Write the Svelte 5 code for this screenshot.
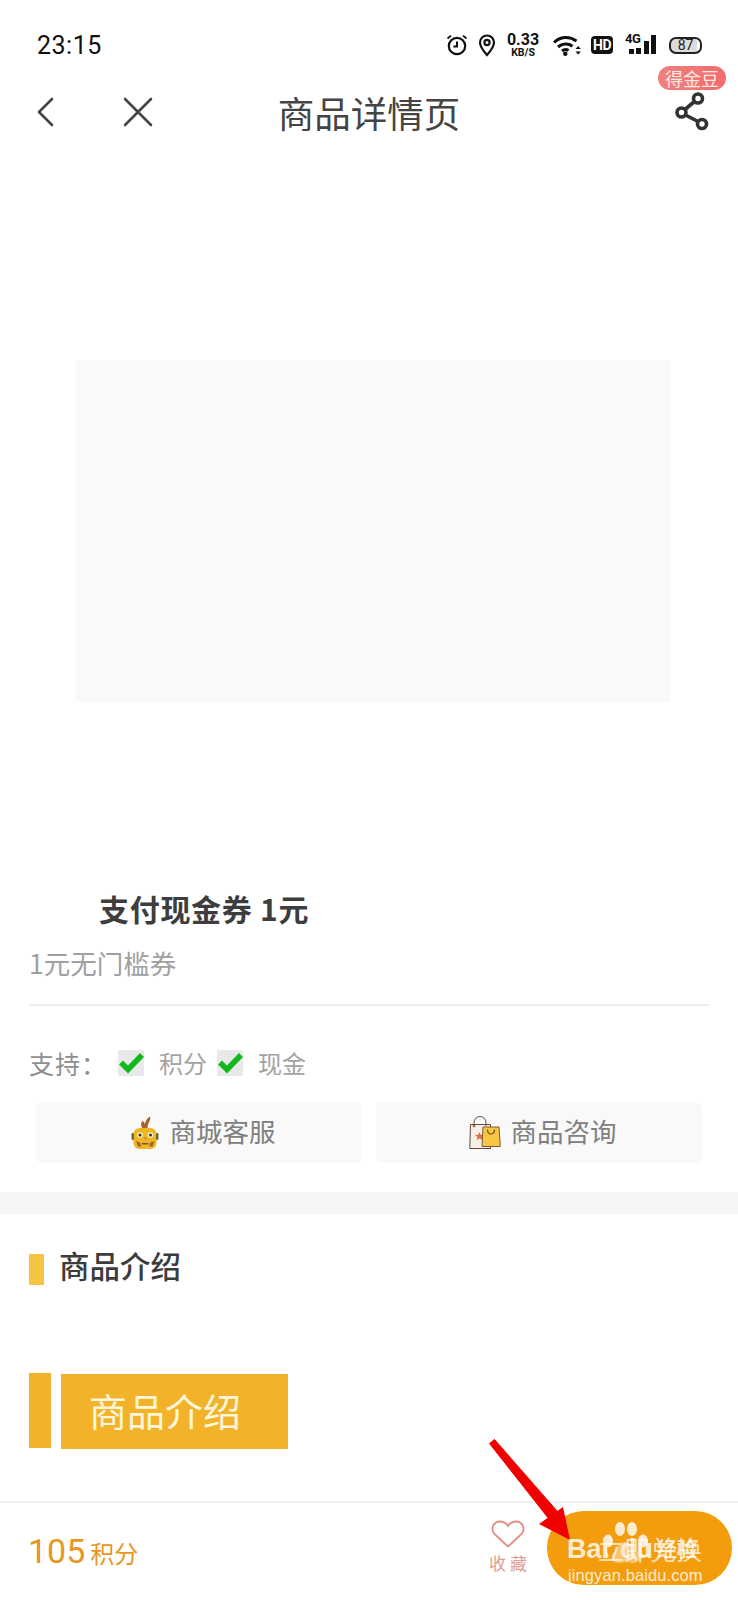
<script>
  const supports = [
    { label: '积分', gap: 'first' },
    { label: '现金', gap: 'second' }
  ];
</script>

<div class="page">
  <header class="status">
    <span class="time">23:15</span>
    <div class="status-icons">
      <svg class="i-alarm" viewBox="0 0 24 24" width="24" height="24" fill="none" stroke="#111" stroke-width="2.2">
        <circle cx="12" cy="13" r="8.2" />
        <path d="M12 8.500v5h-3.600" stroke-width="2" />
        <path d="M2.500 5.500 6 2.600M21.500 5.500 18 2.600" stroke-width="1.800" />
      </svg>
      <svg class="i-pin" viewBox="0 0 20 24" width="20" height="24" fill="none" stroke="#111" stroke-width="2.200">
        <path d="M10 22C6 17.500 3 14 3 9.500a7 7 0 0 1 14 0C17 14 14 17.500 10 22Z" />
        <circle cx="10" cy="9.500" r="2.600" />
      </svg>
      <div class="speed"><b>0.33</b><small>KB/S</small></div>
      <svg class="i-wifi" viewBox="0 0 28 21" width="28" height="21" fill="none" stroke="#111" stroke-width="3">
        <path d="M1 7.500C7 1.500 16 .5 23.500 6" />
        <path d="M5 12c4-3.500 10-4 14.500-.8" />
        <path d="M9 16c2-1.600 4.500-1.800 6.500-.5" />
        <circle cx="12.300" cy="18.800" r="2.200" fill="#111" stroke="none" />
        <path d="M22.500 14l2.700-3 2.700 3ZM22.500 16.500l2.700 3 2.700-3Z" fill="#111" stroke="none" />
      </svg>
      <div class="hd">HD</div>
      <div class="signal">
        <span class="g4">4G</span>
        <i class="b1"></i><i class="b2"></i><i class="b3"></i><i class="b4"></i>
      </div>
      <div class="battery"><span>87</span></div>
    </div>
  </header>

  <nav class="nav">
    <svg class="back" viewBox="0 0 18 30" width="18" height="30" fill="none" stroke="#444" stroke-width="2.600" stroke-linecap="round" stroke-linejoin="round">
      <path d="M16 2 3 15l13 13" />
    </svg>
    <svg class="close" viewBox="0 0 30 30" width="30" height="30" fill="none" stroke="#444" stroke-width="2.600" stroke-linecap="round">
      <path d="M2 2l26 26M28 2 2 28" />
    </svg>
    <h1>商品详情页</h1>
    <span class="badge">得金豆</span>
    <svg class="share" viewBox="0 0 34 40" width="34" height="40" fill="none" stroke="#333" stroke-width="3.600">
      <circle cx="23" cy="7.500" r="4.500" />
      <circle cx="6.500" cy="21.500" r="4.500" />
      <circle cx="27" cy="33" r="4.500" />
      <path d="M19.500 10.500 10 18.500M10.500 24 23 30.500" />
    </svg>
  </nav>

  <section class="hero"><div class="placeholder"></div></section>

  <section class="product">
    <h2>支付现金券 1元</h2>
    <p class="sub">1元无门槛券</p>
    <div class="rule"></div>
    <div class="support">
      <span class="support-label">支持：</span>
      {#each supports as s}
        <span class="check {s.gap}">
          <svg viewBox="0 0 26 26" width="26" height="26" fill="none" stroke="#12b81c" stroke-width="5.500">
            <path d="M3 12.500l7 7L24 5" />
          </svg>
        </span>
        <span class="support-text">{s.label}</span>
      {/each}
    </div>
    <div class="actions">
      <button class="action">
        <svg class="ic" viewBox="0 0 28 34" width="28" height="34">
          <path d="M12 13C9 9 10 6 12 5c1 1 1.500 2 2 3 .5-3 2-6 5-7.500 1 3-1 5-2 8-.5 2-.5 3.500-.5 4.500Z" fill="#a9602a" />
          <rect x="2.500" y="12" width="23" height="21" rx="6" fill="#eeb722" />
          <rect x="0.500" y="17" width="2.500" height="7" rx="1.200" fill="#6f6a3a" />
          <rect x="25" y="17" width="2.500" height="7" rx="1.200" fill="#6f6a3a" />
          <circle cx="9" cy="19" r="2.800" fill="#fbf3d0" />
          <circle cx="19.500" cy="19" r="2.800" fill="#fbf3d0" />
          <circle cx="9" cy="19" r="1.500" fill="#2b2b2b" />
          <circle cx="19.500" cy="19" r="1.500" fill="#2b2b2b" />
          <path d="M12.500 21.500h3.500l-1.700 2Z" fill="#d9742a" />
          <path d="M5 25l4 1.500 1.500 4H7ZM23.500 25l-4 1.500-1.500 4h3.500Z" fill="#a9602a" />
          <rect x="11" y="27" width="6.500" height="1.500" fill="#6f5a2a" />
        </svg>
        <span>商城客服</span>
      </button>
      <button class="action right">
        <svg class="ic" viewBox="0 0 32 34" width="32" height="34" fill="none">
          <path d="M1.500 8.500h20v24H0.800Z" fill="#f6efe9" stroke="#6a4a38" stroke-width="1" />
          <path d="M5 10V6.500a6 6 0 0 1 12 0V10" stroke="#6a4a38" stroke-width="1" />
          <circle cx="5" cy="10" r="1" stroke="#6a4a38" stroke-width="0.800" />
          <path d="M10.500 16l1.300 3h3.200l-2.500 2 1 3.200-3-1.900-3 1.900 1-3.200-2.500-2h3.200Z" fill="#e0683a" />
          <path d="M14 11h16l1.300 19.500H13Z" fill="#f7c744" stroke="#7a5a30" stroke-width="1" />
          <path d="M18.500 13.500c0 6 7 6 7 0" stroke="#7a4a10" stroke-width="1.200" />
        </svg>
        <span>商品咨询</span>
      </button>
    </div>
  </section>

  <div class="band"></div>

  <section class="intro">
    <div class="intro-head"><i></i><h3>商品介绍</h3></div>
    <div class="banner">
      <i></i>
      <div class="banner-text">商品介绍</div>
    </div>
  </section>

  <footer class="foot">
    <div class="points"><strong>105</strong><span>积分</span></div>
    <div class="fav">
      <svg viewBox="0 0 34 28" width="34" height="28" fill="none" stroke="#e28f7f" stroke-width="1.800">
        <path d="M17 26.500 3.500 14C-1 9 2.500 1.500 9 1.500c3.500 0 6.500 2 8 4.500 1.500-2.500 4.500-4.500 8-4.500 6.500 0 10 7.500 5.500 12.500Z" />
      </svg>
      <span>收 藏</span>
    </div>
    <button class="redeem">立即兑换</button>
  </footer>

  <div class="watermark">
    <svg class="paw" viewBox="0 0 60 50" width="60" height="50" fill="#fff">
      <ellipse cx="11" cy="21" rx="5" ry="6.500" />
      <ellipse cx="23" cy="9" rx="5" ry="7" />
      <ellipse cx="35" cy="9" rx="5" ry="7" />
      <ellipse cx="46" cy="21" rx="5" ry="6.500" />
      <path d="M28 22c-6 0-8 7-12 11-4 5 0 11 6 10 4-1 9-1 13 0 6 1 10-5 6-10-4-4-7-11-13-11Z" fill-opacity="0.500" />
    </svg>
    <div class="wm-row">
      <span class="wm-bai">Bai</span><span class="wm-du">du</span><span class="wm-jy">经验</span>
    </div>
    <div class="wm-url">jingyan.baidu.com</div>
  </div>

  <svg class="arrow" viewBox="0 0 110 120" width="110" height="120">
    <path d="M2.500 8.500 7.500 4.500 70 76 62 84Z" fill="#f10000" stroke="#f10000" stroke-width="1" stroke-linejoin="round" />
    <path d="M83 105 52 89 76 72Z" fill="#f10000" />
  </svg>
</div>

<style>
  :global(body) {
    margin: 0;
    background: #fff;
  }
  .page {
    position: relative;
    width: 738px;
    height: 1600px;
    overflow: hidden;
    background: #fff;
    font-family: "Noto Sans CJK SC", "Noto Sans", sans-serif;
    color: #444;
  }
  .status {
    height: 90px;
    box-sizing: border-box;
    display: flex;
    align-items: center;
    justify-content: space-between;
    padding: 0 36px 0 37px;
  }
  .time {
    font: 400 25px "Roboto", sans-serif;
    letter-spacing: 0.5px;
    color: #111;
  }
  .status-icons {
    display: flex;
    align-items: center;
  }
  .i-pin {
    margin-left: 8px;
  }
  .speed {
    width: 34px;
    margin-left: 9px;
    display: flex;
    flex-direction: column;
    align-items: center;
    color: #111;
    font-family: "Roboto", sans-serif;
    line-height: 1;
  }
  .speed b {
    font-size: 16px;
    font-weight: 700;
    line-height: 15px;
  }
  .speed small {
    font-size: 10.500px;
    font-weight: 700;
    line-height: 11px;
  }
  .i-wifi {
    margin-left: 13px;
  }
  .hd {
    margin-left: 10px;
    width: 22px;
    height: 18px;
    background: #111;
    color: #fff;
    border-radius: 4px;
    font: 700 14px/18px "Roboto", sans-serif;
    letter-spacing: -0.5px;
    text-align: center;
  }
  .signal {
    position: relative;
    margin-left: 12px;
    width: 31px;
    height: 20px;
    display: flex;
    align-items: flex-end;
    gap: 2.500px;
    box-sizing: border-box;
    padding-left: 4px;
    top: -1px;
  }
  .g4 {
    position: absolute;
    left: 0;
    top: -1px;
    font: 700 13px/12px "Roboto", sans-serif;
    letter-spacing: -0.5px;
    color: #111;
  }
  .signal i {
    display: block;
    width: 5px;
    background: #111;
  }
  .b1 { height: 5px; }
  .b2 { height: 6px; }
  .b3 { height: 13px; }
  .b4 { height: 19px; }
  .battery {
    position: relative;
    margin-left: 13px;
    width: 33px;
    height: 17px;
    border: 2px solid #222;
    border-radius: 7px;
    background: linear-gradient(90deg, #dcdcdc 88%, #fff 88%);
    display: flex;
    align-items: center;
    justify-content: center;
    box-sizing: border-box;
    overflow: hidden;
  }
  .battery span {
    font: 400 14px/13px "Roboto", sans-serif;
    color: #222;
  }
  .nav {
    position: relative;
    height: 50px;
    display: flex;
    align-items: center;
    justify-content: center;
  }
  .nav h1 {
    margin: 0;
    font-size: 36.500px;
    font-weight: 400;
    line-height: 50px;
    color: #444;
    transform: translateY(-2px);
  }
  .back {
    position: absolute;
    left: 36px;
    top: 7px;
  }
  .close {
    position: absolute;
    left: 123px;
    top: 7px;
  }
  .badge {
    position: absolute;
    left: 658px;
    top: -24px;
    width: 68px;
    height: 24px;
    border-radius: 12px;
    background: linear-gradient(90deg, #f0807f, #f46c6b);
    color: #fde9e6;
    font-size: 18px;
    line-height: 24px;
    text-align: center;
  }
  .share {
    position: absolute;
    left: 675px;
    top: 1px;
  }
  .hero {
    height: 748px;
    box-sizing: border-box;
    padding: 220px 67px 0 76px;
  }
  .placeholder {
    height: 342px;
    background: #f8f9fb;
  }
  .product {
    padding: 0 29px;
  }
  .product h2 {
    margin: 0;
    padding-left: 70px;
    font-size: 30px;
    font-weight: 700;
    line-height: 40px;
    letter-spacing: 0.7px;
    color: #3d3d3d;
  }
  .sub {
    margin: 17px 0 0;
    font-size: 26.500px;
    line-height: 36px;
    color: #a0a0a0;
  }
  .rule {
    margin-top: 23px;
    height: 2px;
    background: #eeeeee;
  }
  .support {
    margin-top: 39px;
    height: 36px;
    display: flex;
    align-items: center;
  }
  .support-label {
    width: 89px;
    font-size: 25px;
    line-height: 36px;
    letter-spacing: 1px;
    color: #8e8e8e;
  }
  .check {
    width: 26px;
    height: 26px;
    background: #e9e9e9;
    border-radius: 2px;
  }
  .check svg {
    display: block;
    overflow: visible;
  }
  .check.second {
    margin-left: 10px;
  }
  .support-text {
    margin-left: 15px;
    font-size: 24px;
    line-height: 36px;
    color: #a3a3a3;
  }
  .actions {
    margin-top: 21px;
    padding: 0 7px;
    display: flex;
    gap: 14px;
  }
  .action {
    width: 326px;
    height: 61px;
    border: 0;
    border-radius: 6px;
    background: #f9f9f9;
    display: flex;
    align-items: center;
    justify-content: center;
    gap: 11px;
    font-family: inherit;
    font-size: 26.500px;
    color: #808080;
    padding: 0 0 0 8px;
  }
  .action span {
    margin-bottom: 4px;
  }
  .action .ic {
    display: block;
  }
  .action.right {
    gap: 10px;
    padding-left: 7px;
  }
  .band {
    margin-top: 29px;
    height: 22px;
    background: #f5f5f5;
  }
  .intro {
    padding: 0 29px;
    height: 287px;
    box-sizing: border-box;
  }
  .intro-head {
    padding-top: 30px;
    display: flex;
    align-items: center;
    gap: 15px;
  }
  .intro-head i {
    width: 15px;
    height: 31px;
    margin-top: 8px;
    background: #f4c443;
  }
  .intro-head h3 {
    margin: 0;
    font-size: 30.500px;
    font-weight: 500;
    line-height: 42px;
    color: #3c3c3c;
  }
  .banner {
    margin-top: 87px;
    display: flex;
    gap: 10px;
  }
  .banner i {
    width: 22px;
    height: 75px;
    background: #f2b32b;
  }
  .banner-text {
    width: 227px;
    height: 75px;
    margin-top: 1px;
    box-sizing: border-box;
    padding-left: 28px;
    background: #f2b32b;
    color: #fff6dc;
    font-size: 38px;
    line-height: 71px;
  }
  .foot {
    height: 98px;
    box-sizing: border-box;
    border-top: 2px solid #f0f0f0;
    padding: 8px 6px 0 28px;
    display: flex;
    align-items: flex-start;
  }
  .points {
    margin-top: 17px;
    flex: 1;
    display: flex;
    align-items: baseline;
    color: #e8961e;
  }
  .points strong {
    font: 400 34px/46px "Roboto", sans-serif;
  }
  .points span {
    margin-left: 5px;
    font-size: 24px;
    line-height: 46px;
  }
  .fav {
    width: 56px;
    margin-top: 9px;
    margin-right: 11px;
    display: flex;
    flex-direction: column;
    align-items: center;
    color: #e39c8d;
  }
  .fav svg {
    display: block;
  }
  .fav span {
    font-size: 17px;
    line-height: 26px;
    margin-top: 2px;
    white-space: nowrap;
  }
  .redeem {
    width: 185px;
    height: 74px;
    border: 0;
    border-radius: 37px;
    background: #f39c0c;
    color: rgba(255, 255, 255, 0.7);
    font-family: inherit;
    font-size: 26px;
    padding: 0 0 0 21px;
  }
  .watermark {
    position: absolute;
    left: 567px;
    top: 1518px;
    width: 135px;
    height: 68px;
    color: #fff;
    opacity: 0.8;
  }
  .paw {
    position: absolute;
    left: 30px;
    top: 2px;
  }
  .wm-row {
    position: absolute;
    left: 0;
    top: 0;
    width: 135px;
    height: 44px;
    font-family: "Liberation Sans", sans-serif;
    font-weight: 700;
    font-size: 27px;
  }
  .wm-bai {
    position: absolute;
    left: 0;
    top: 11px;
    line-height: 40px;
  }
  .wm-du {
    position: absolute;
    left: 53px;
    top: 11px;
    line-height: 40px;
  }
  .wm-jy {
    position: absolute;
    left: 90px;
    top: 16px;
    font-family: "Noto Sans CJK SC", sans-serif;
    font-size: 20px;
    line-height: 30px;
  }
  .wm-url {
    position: absolute;
    left: 1px;
    top: 45px;
    font-family: "Liberation Sans", sans-serif;
    font-size: 16.500px;
    line-height: 24px;
    letter-spacing: 0.1px;
    white-space: nowrap;
  }
  .arrow {
    position: absolute;
    left: 487px;
    top: 1435px;
  }
</style>
